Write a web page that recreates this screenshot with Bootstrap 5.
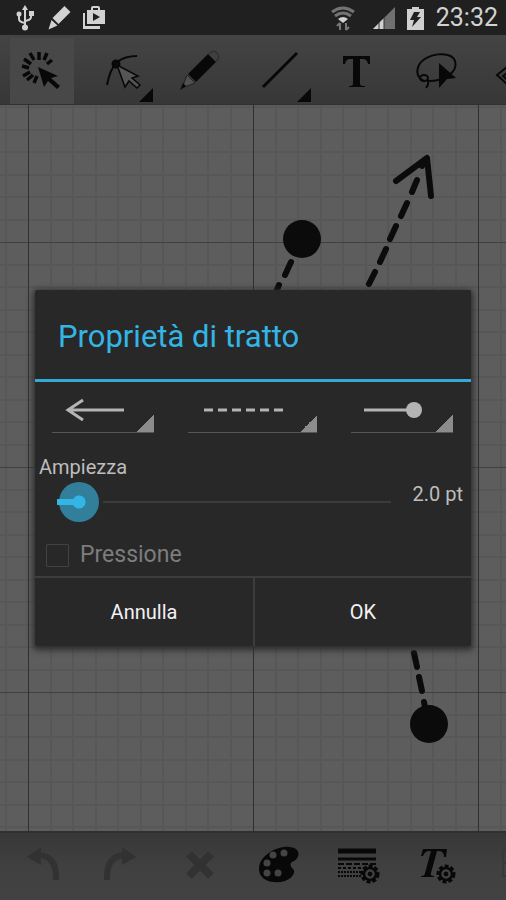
<!DOCTYPE html>
<html lang="it">
<head>
<meta charset="utf-8">
<meta name="viewport" content="width=device-width, initial-scale=1">
<title>Proprietà di tratto</title>
<link href="https://cdn.jsdelivr.net/npm/bootstrap@5.3.0/dist/css/bootstrap.min.css" rel="stylesheet">
<style>
  body { font-family: Roboto, "Noto Sans", sans-serif; background: #424242; color: #bdbdbd; }
  svg { display: block; }
  .status-strip { height: 35px; background: #202020; color: #d2d2d2; padding: 0 8px 0 15px; }
  .status-icons { gap: 12px; }
  .clock { font-size: 25px; line-height: 34px; }
  .toolbar { gap: 15px; padding: 0 0 0 10px; color: #080808; }
  .toolbar-top { height: 70px; background: linear-gradient(#444, #373737); border-bottom: 1px solid #303030; padding-top: 3px; }
  .toolbar-bottom { height: 69px; background: linear-gradient(#373737, #404040 50%, #424242); border-top: 2px solid #303030; padding-bottom: 4px; }
  .tool { width: 64px; height: 100%; color: inherit; background: none; border: 0; padding: 0; flex: none; }
  .tool.chosen { background: #484848; }
  .tool:disabled { color: #323232; }
  .sheet { padding: 24px 35px; }
  .dialog-box { background: #282828; box-shadow: 0 2px 6px 2px #2c2c2c; border-radius: 2px; }
  .dialog-box h1 { color: #33b5e5; font-size: 31px; line-height: 36px; font-weight: 400; padding: 29px 23px 24px; border-bottom: 3px solid #33a9d6; }
  .spinners { padding: 0 18px 0 17px; gap: 34px; }
  .spinner { flex: 102 1 0; height: 51px; background: linear-gradient(135deg, transparent 50%, #8c8c8c 50%) right bottom / 17px 17px no-repeat; border: 0; border-bottom: 1px solid #565656; padding: 0; color: #b4b4b4; }
  .spinner.wide { flex-grow: 129; }
  .width-row { padding: 22px 8px 0 4px; }
  .width-label, .width-value { font-size: 20px; line-height: 24px; }
  .width-value { margin: 20px 0 10px 22px; }
  .width-slider { appearance: none; -webkit-appearance: none; height: 40px; margin: 3px 0 0 18px; min-width: 0; border: 0;
    background: linear-gradient(#33b5e5, #33b5e5) 0 50% / 10px 6px no-repeat, linear-gradient(90deg, #282828 46px, #3c3c3c 46px) 0 50% / 100% 2px no-repeat; }
  .width-slider::-webkit-slider-thumb { -webkit-appearance: none; width: 40px; height: 40px; border-radius: 50%;
    background: linear-gradient(#33b5e5, #33b5e5) 0 50% / 20px 6px no-repeat, radial-gradient(circle, #33b5e5 6px, #317f9b 7px); }
  .pressure { gap: 11px; padding: 17px 11px 5px; font-size: 23px; line-height: 32px; color: #7d7d7d; }
  .pressure .form-check-input { width: 23px; height: 23px; margin: 0; background-color: #282828; border: 1px solid #424242; border-radius: 1px; opacity: 1; }
  .pressure .form-check-input:disabled ~ .form-check-label { opacity: 1; }
  .actions { border-top: 2px solid #3d3d3d; }
  .actions button { height: 68px; background: none; border: 0; color: #f2f2f2; font-size: 20px; line-height: 24px; }
  .actions button + button { border-left: 2px solid #3d3d3d; }
</style>
</head>
<body>
<div class="d-flex flex-column min-vh-100 overflow-hidden">
  <header class="status-strip d-flex align-items-center justify-content-between">
    <div class="status-icons d-flex align-items-center">
      <svg width="20" height="26" viewBox="0 0 20 26" fill="none" stroke="currentColor" stroke-width="2"><path d="M10 4v18M4 10v4q0 3 6 4M16 9v3q0 3-6 4"/><path d="M10 0l3 5H7z" fill="currentColor" stroke="none"/><circle cx="10" cy="22.500" r="3" fill="currentColor" stroke="none"/><circle cx="4" cy="9" r="2.500" fill="currentColor" stroke="none"/><path d="M14 6h5v5h-5z" fill="currentColor" stroke="none"/></svg>
      <svg width="24" height="24" viewBox="0 0 22 24" fill="currentColor"><path d="M16.500 0l6 6-12 12-6-6zM3.500 14l6 5.500-9 4z"/></svg>
      <svg width="22" height="24" viewBox="0 0 22 24" fill="currentColor"><path d="M0 7h2v13h15v3H0z"/><path fill-rule="evenodd" d="M4 4h4V2q0-2 2-2h5q2 0 2 2v2h5v14H4zM10 4h5V2h-5zM10 7v8l7-4z"/></svg>
    </div>
    <div class="d-flex align-items-center">
      <svg width="26" height="26" viewBox="0 0 26 26" fill="none" stroke-width="3"><path d="M2 7q11-8 22 0M5 11q8-6 16 0" stroke="#737373"/><path d="M8 14q5-4 10 0l-5 4z" fill="#d0d0d0"/><path d="M10 25v-7m-3 3l3-3M16 18v7m3-3l-3 3" stroke="#777" stroke-width="2"/></svg>
      <svg class="ms-3" width="24" height="24" viewBox="0 0 24 24"><path d="M1 23L23 1v22z" fill="#707070"/><path d="M1 23l11-11v11z" fill="#d0d0d0"/><path d="M7 15v8M12 12v11" stroke="#303030"/></svg>
      <svg class="ms-2 me-2" width="24" height="26" viewBox="0 0 24 26"><path d="M8 2h7v2h5v21H3V4h5z" fill="#d0d0d0"/><path d="M10 7h6l-3 5h4L8 22l2-7H6z" fill="#202020"/></svg>
      <span class="clock">23:32</span>
    </div>
  </header>

  <nav class="toolbar toolbar-top d-flex overflow-hidden" aria-label="Strumenti">
    <button class="tool chosen" aria-label="Seleziona"><svg width="64" height="64" viewBox="0 0 64 64" fill="currentColor"><g stroke="currentColor" stroke-width="3.500"><path d="M29 21v-8M34 21l3-7M37 25l5-4M24 21l-4-7M21 25l-7-5M19 29l-7-2M20 33l-7 4M23 36l-6 5M27 37l-3 7"/></g><path d="M28 28l20 9-7 2 9 8-3 3-9-8-4 6z"/></svg></button>
    <button class="tool" aria-label="Modifica curva"><svg width="64" height="64" viewBox="0 0 64 64"><path d="M18 46q3-16 10-23 8-6 20-6" fill="none" stroke="currentColor" stroke-width="2"/><circle cx="27" cy="25" r="3" fill="none" stroke="currentColor" stroke-width="3"/><path d="M28 26l21 11-6 2 8 7-3 3-8-7-4 6z" fill="#555" stroke="currentColor" stroke-width="1.500"/><path d="M64 49v14H50z" fill="currentColor"/></svg></button>
    <button class="tool" aria-label="Matita"><svg width="64" height="64" viewBox="0 0 64 64"><path d="M40 15l8 8-20 20-8-8z" fill="currentColor"/><path d="M41 15q4-5 8-1 4 5-1 8" fill="none" stroke="#303030" stroke-width="1.500"/><path d="M19 36l8 8-13 5z" fill="#505050" stroke="#222"/><path d="M15 44l3 3-6 4z" fill="currentColor"/></svg></button>
    <button class="tool" aria-label="Linea"><svg width="64" height="64" viewBox="0 0 64 64"><path d="M16 48l34-34" stroke="currentColor" stroke-width="3"/><path d="M64 49v14H50z" fill="currentColor"/></svg></button>
    <button class="tool" aria-label="Testo"><svg width="64" height="64" viewBox="0 0 64 64"><path d="M17 17h27v8h-2q-1-5-5-5h-3v25q0 2 5 2v1H23v-1q4 0 4-2V20h-3q-4 0-5 5h-2z" fill="currentColor"/></svg></button>
    <button class="tool" aria-label="Lazo"><svg width="64" height="64" viewBox="0 0 64 64"><path d="M19 42q-10-5-5-16c6-12 32-15 36-4 4 12-14 21-28 20" fill="none" stroke="currentColor" stroke-width="2"/><ellipse cx="19" cy="39" rx="4" ry="3" fill="none" stroke="currentColor" stroke-width="2"/><path d="M22 40q3 4-1 9" fill="none" stroke="currentColor" stroke-width="2"/><path d="M34 24l17 15-9 1-8 9z" fill="currentColor"/></svg></button>
    <button class="tool" aria-label="Gomma"><svg width="64" height="64" viewBox="0 0 64 64" fill="none" stroke="currentColor" stroke-width="2"><path d="M28 24L13 36l12 11 16-11M28 30l-9 7 7 6 9-5"/></svg></button>
  </nav>

  <main class="sheet position-relative flex-grow-1 d-flex flex-column justify-content-center">
    <svg class="position-absolute top-0 start-0 w-100 h-100" aria-hidden="true">
      <defs><pattern id="gridlines" x="28" y="137" width="225" height="225" patternUnits="userSpaceOnUse">
        <path d="M23 0v225M45 0v225M68 0v225M90 0v225M113 0v225M135 0v225M158 0v225M180 0v225M203 0v225M0 23h225M0 45h225M0 68h225M0 90h225M0 113h225M0 135h225M0 158h225M0 180h225M0 203h225" stroke="#575757" stroke-width="2"/>
        <path d="M0 0h225v1H0z" fill="#404040"/><path d="M0 0h1v225H0z" fill="#303030"/>
      </pattern></defs>
      <rect width="100%" height="100%" fill="#5d5d5d"/>
      <rect width="100%" height="100%" fill="url(#gridlines)"/>
      <g fill="#0b0b0b" stroke="#0b0b0b" stroke-width="6" stroke-linecap="round">
        <circle cx="302" cy="134" r="19" stroke="none"/>
        <path d="M291 157l-6 13M279 180l-5 12"/>
        <path d="M396 76l31-23 4 38" fill="none" stroke-linejoin="round"/>
        <path d="M423 58l-1 3M417 75l-5 12M407 98l-6 13M396 121l-6 13M386 144l-6 13M375 167l-6 12"/>
        <path d="M414 548l3 14M419 572l3 14M424 597l1 5"/>
        <circle cx="429" cy="619" r="19" stroke="none"/>
      </g>
    </svg>

    <section class="dialog-box position-relative" role="dialog" aria-labelledby="dialog-title">
      <h1 id="dialog-title" class="m-0">Proprietà di tratto</h1>
      <div class="spinners d-flex">
        <button class="spinner d-flex" aria-haspopup="listbox" aria-label="Inizio linea"><svg width="100%" height="50" viewBox="0 0 102 50" fill="none" stroke="currentColor" stroke-width="3"><path d="M72 28H16M31 18L16 28l15 10"/></svg></button>
        <button class="spinner wide d-flex" aria-haspopup="listbox" aria-label="Tratteggio"><svg width="100%" height="50" viewBox="0 0 129 50" stroke="currentColor" stroke-width="3"><path d="M16 28h79" stroke-dasharray="9 5"/></svg></button>
        <button class="spinner d-flex" aria-haspopup="listbox" aria-label="Fine linea"><svg width="100%" height="50" viewBox="0 0 102 50"><path d="M13 28h50" stroke="currentColor" stroke-width="3"/><circle cx="63" cy="28" r="8" fill="currentColor"/></svg></button>
      </div>
      <div class="width-row d-flex align-items-center">
        <div class="d-flex flex-column flex-grow-1">
          <label class="width-label" for="stroke-width">Ampiezza</label>
          <input class="width-slider" id="stroke-width" type="range" min="0" max="300" step="1" value="2">
        </div>
        <output class="width-value" for="stroke-width">2.0 pt</output>
      </div>
      <div class="pressure d-flex align-items-center">
        <input class="form-check-input" id="pressure" type="checkbox" disabled>
        <label class="form-check-label" for="pressure">Pressione</label>
      </div>
      <div class="actions d-flex">
        <button class="w-50">Annulla</button>
        <button class="w-50">OK</button>
      </div>
    </section>
  </main>

  <nav class="toolbar toolbar-bottom d-flex overflow-hidden" aria-label="Azioni">
    <button class="tool" disabled aria-label="Annulla operazione"><svg width="64" height="64" viewBox="0 0 64 64"><path d="M29 22q18 1 17 25" fill="none" stroke="currentColor" stroke-width="6"/><path d="M17 24l14-10v18z" fill="currentColor"/></svg></button>
    <button class="tool" disabled aria-label="Ripeti"><svg width="64" height="64" viewBox="0 0 64 64"><path d="M35 22q-18 1-17 25" fill="none" stroke="currentColor" stroke-width="6"/><path d="M47 24L33 14v18z" fill="currentColor"/></svg></button>
    <button class="tool" disabled aria-label="Elimina"><svg width="64" height="64" viewBox="0 0 64 64"><path d="M21 21l22 22M43 21L21 43" stroke="currentColor" stroke-width="8"/></svg></button>
    <button class="tool" aria-label="Colori"><svg width="64" height="64" viewBox="0 0 64 64"><path d="M49 16c5 4 2 11-4 13-3 2-1 5 2 8 1 4-3 9-9 11-12 4-27-1-26-13 1-15 25-26 37-19z" fill="currentColor"/><g fill="#444"><circle cx="37" cy="20" r="3.500"/><circle cx="26" cy="22" r="3.500"/><circle cx="20" cy="30" r="3.500"/><circle cx="20" cy="40" r="3.500"/><circle cx="31" cy="40" r="3.500"/></g></svg></button>
    <button class="tool" aria-label="Stile linea"><svg width="64" height="64" viewBox="0 0 64 64" stroke="currentColor" fill="none"><path d="M12 18h38" stroke-width="5"/><path d="M12 26h38" stroke-width="3"/><path d="M12 31h38" stroke-width="2" stroke-dasharray="6 2"/><path d="M12 35h26" stroke-width="2" stroke-dasharray="3 2"/><path d="M12 39h24M12 43h24" stroke-width="2" stroke-dasharray="2 1"/><circle cx="44" cy="41" r="8" stroke-width="3" stroke-dasharray="4 2"/><circle cx="44" cy="41" r="6" fill="#414141" stroke-width="2.500"/><circle cx="44" cy="41" r="2" fill="currentColor"/></svg></button>
    <button class="tool" aria-label="Stile testo"><svg width="64" height="64" viewBox="0 0 64 64"><path d="M18 16h24l-1 8h-2q0-6-5-6h-2l-6 22q-1 3 3 3v1H16v-1q4 0 4-3l6-22h-2q-4 0-6 5h-2z" fill="currentColor"/><g stroke="currentColor" fill="none"><circle cx="41" cy="41" r="8" stroke-width="3" stroke-dasharray="4 2"/><circle cx="41" cy="41" r="6" fill="#414141" stroke-width="2.500"/><circle cx="41" cy="41" r="2" fill="currentColor"/></g></svg></button>
    <button class="tool" aria-label="Altro"><svg width="64" height="64" viewBox="0 0 64 64" fill="none" stroke="#383838" stroke-width="2"><path d="M19 17h26v26H19zM19 30h26"/></svg></button>
  </nav>
</div>
<script src="https://cdn.jsdelivr.net/npm/bootstrap@5.3.0/dist/js/bootstrap.bundle.min.js"></script>
</body>
</html>
